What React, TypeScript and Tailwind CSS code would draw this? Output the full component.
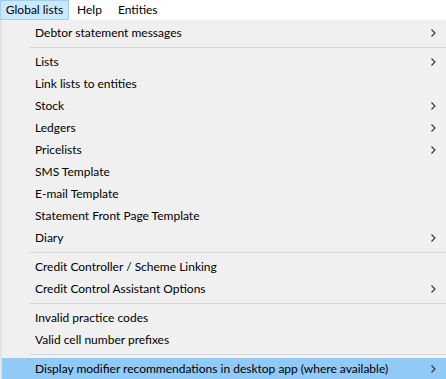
import React from "react";

type Entry = { label: string; sub?: boolean; active?: boolean } | "sep";

const entries: Entry[] = [
	{ label: "Debtor statement messages", sub: true },
	"sep",
	{ label: "Lists", sub: true },
	{ label: "Link lists to entities" },
	{ label: "Stock", sub: true },
	{ label: "Ledgers", sub: true },
	{ label: "Pricelists", sub: true },
	{ label: "SMS Template" },
	{ label: "E-mail Template" },
	{ label: "Statement Front Page Template" },
	{ label: "Diary", sub: true },
	"sep",
	{ label: "Credit Controller / Scheme Linking" },
	{ label: "Credit Control Assistant Options", sub: true },
	"sep",
	{ label: "Invalid practice codes" },
	{ label: "Valid cell number prefixes" },
	"sep",
	{ label: "Display modifier recommendations in desktop app (where available)", sub: true, active: true },
];

function Chevron() {
	return (
		<svg width="5" height="8" viewBox="0 0 5 8" className="text-[#333]">
			<path d="M0.5 0.5 L4 4 L0.5 7.5" fill="none" stroke="currentColor" strokeWidth="1.1" />
		</svg>
	);
}

export default function App() {
	return (
		<div className="w-[446px] h-[379px] overflow-hidden bg-[#f0f0f0] text-[12px] text-black" style={{ fontFamily: 'Lato, "Noto Sans", sans-serif' }}>
			<div className="flex h-[20px] items-stretch bg-white">
				<div className="flex w-[69px] items-center justify-center border border-[#99d1ff] bg-[#cce8ff]">Global lists</div>
				<div className="flex items-center px-[8px]">Help</div>
				<div className="flex items-center px-[8px]">Entities</div>
			</div>
			<div className="flex flex-col border-l-2 border-[#e3e3e3] pt-[2px]">
				{entries.map((e, i) =>
					e === "sep" ? (
						<div key={i} className="flex h-[7px] items-start pl-[28px] pt-[3px]">
							<div className="h-px w-full bg-[#d7d7d7]" />
						</div>
					) : (
						<div key={i} className={`flex h-[22px] items-center pl-[33px] pr-[10px] ${e.active ? "bg-[#91c9f7]" : ""}`}>
							<span className="flex-1 whitespace-nowrap">{e.label}</span>
							{e.sub && <Chevron />}
						</div>
					)
				)}
			</div>
		</div>
	);
}
